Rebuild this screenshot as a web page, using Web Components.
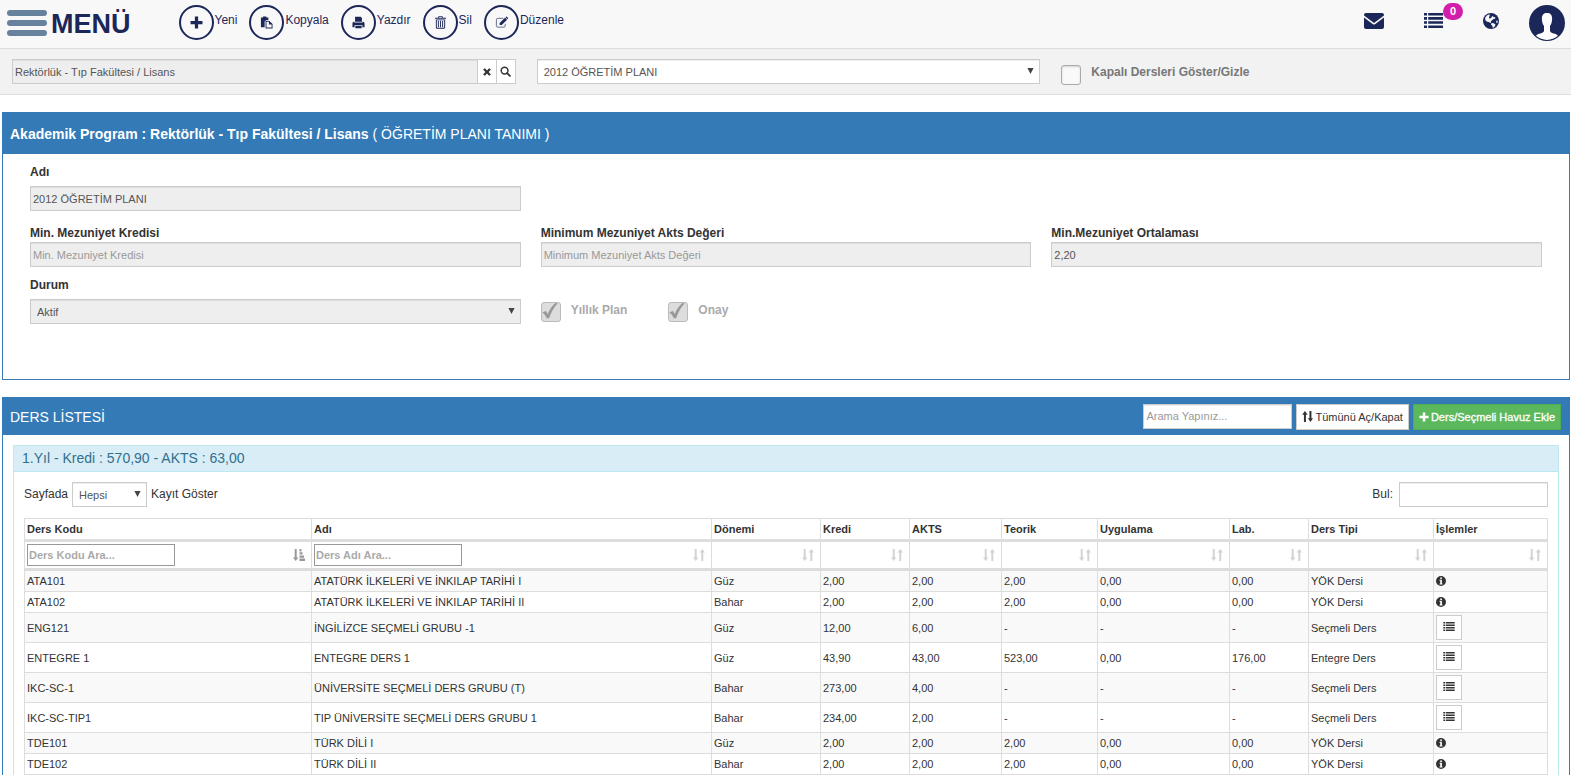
<!DOCTYPE html>
<html lang="tr">
<head>
<meta charset="utf-8">
<meta name="viewport" content="width=device-width, initial-scale=1">
<title>Öğretim Planı Tanımı</title>
<style>
  body {
    margin: 0;
    font: 12px/20px "Liberation Sans", Arial, sans-serif;
    color: #333;
    background: #fff;
  }
</style>
</head>
<body>
<plan-page></plan-page>

<script>
// Icon shapes, all filled with the current text colour
const ICONS = {
  plus: ['0 0 12 12', '<path d="M4.500 .5h3v4h4v3h-4v4h-3v-4h-4v-3h4z"/>'],
  paste: ['0 0 14 14', '<path d="M1 1.500h2.200V.6h3.600v.9H9v3H6.500L5 6v6H1z"/><path fill-rule="evenodd" d="M6 5.300h4.200L13.500 8.600v4.900H6zM7 6.300v6.200h5.500V9.200H9.600V6.300z"/>'],
  print: ['0 0 14 14', '<path d="M3.300 .8h6L10.700 2.200V6.200H3.300z"/><path fill-rule="evenodd" d="M.5 8Q.5 6.200 2 6.200h.8v1.300h8.400V6.200h.8q1.500 0 1.500 1.800V12h-2.300V9.800H2.800V12H.5z"/><path d="M3.600 10.600h6.800V13.200H3.600z"/><path d="M2.800 7h8.400v2.900H2.800z"/>'],
  trash: ['0 0 14 14', '<path fill-rule="evenodd" d="M4.500 2V1q0-.8.8-.8h3.400q.8 0 .8.8v1h3.500v1h-12V2zM5.500 2h3v-.8h-3z"/><path fill-rule="evenodd" d="M2 3.700h10V12.500q0 1.200-1.200 1.200H3.200Q2 13.700 2 12.500zM3 4.700v7.500q0 .5.500.5h7q.5 0 .5-.5V4.700z"/><path d="M4.200 5.200h1v6.800h-1zM6.500 5.200h1v6.800h-1zM8.800 5.200h1v6.800h-1z"/>'],
  edit: ['0 0 14 14', '<path d="M9 2.500H3Q1.500 2.500 1.500 4v6.500Q1.500 12 3 12h6.500q1.500 0 1.500-1.500V8.500" fill="none" stroke="currentColor" stroke-opacity=".7"/><path d="M5 9.800V7.600L10.800 1.800 13 4 7.200 9.800z"/><path d="M11.300 1.300l.6-.6q.4-.4.8 0l1.300 1.300q.4.400 0 .8l-.6.600z"/>'],
  mail: ['0 0 20 16', '<path d="M2 0h16q2 0 2 2v.5L10 10 0 2.500V2q0-2 2-2z"/><path d="M0 4.500l9 6.700q1 .7 2 0l9-6.700V14q0 2-2 2H2q-2 0-2-2z"/>'],
  list: ['0 0 19 15', '<path d="M0 0h3v2.600H0zM4.200 0H19v2.600H4.200zM0 4.100h3v2.600H0zM4.200 4.100H19v2.600H4.200zM0 8.200h3v2.600H0zM4.200 8.200H19v2.600H4.200zM0 12.400h3V15H0zM4.200 12.400H19V15H4.200z"/>'],
  globe: ['0 0 16 16', '<circle cx="8" cy="8" r="8"/><path fill="#f8f8f8" d="M6.500 1.300L3.800 2.400 2 5.100l.5 2.400 1.600 1.300 1.800.3 1.200 1 1-.5-.3-1.200 1.500-1.500L10.600 6l1.800-.6L12 4l-1.500.3-.6-1.400-1.600.8-1.600-.6zM8.500 10l2.200.3 1.800 1.300-.6 1.600-2 1.700-.7-2.200-1.200-1.200zM13 8l1.700-.5-.2 2.200-.8.600z"/><path d="M6 3.500l2-.8 1 1.300-1.300 1.200-1.500.2z"/>'],
  avatar: ['0 0 36 36', '<circle cx="18" cy="18" r="18"/><path fill="#fff" d="M18 8c3.600 0 5.300 2.300 5.100 6-.1 3.300-1 5.500-2.100 7v5c.4 2.500 6.500 2.300 8 4.800A16.800 16.800 0 0 1 7 30.800c1.500-2.500 7.600-2.300 8-4.800v-5c-1.100-1.500-2-3.700-2.100-7C12.700 10.300 14.400 8 18 8z"/>'],
  times: ['0 0 10 10', '<path d="M2.200 .8L5 3.600 7.800 .8 9.200 2.200 6.400 5l2.800 2.800-1.400 1.400L5 6.400 2.200 9.200.8 7.800 3.600 5 .8 2.200z" stroke="currentColor" stroke-width="1.200"/>'],
  search: ['0 0 12 12', '<circle cx="5" cy="5" r="3.700" fill="none" stroke="currentColor" stroke-width="1.600"/><path d="M7.800 7.800l3 3" stroke="currentColor" stroke-width="2" stroke-linecap="round"/>'],
  swap: ['0 0 12 12', '<path d="M3.200 0l3 4H4.300V12H2.100V4H.2zM9.200 12L6.400 8h1.700V0h2.200v8H12z"/>'],
  sort: ['0 0 12 12', '<path d="M2.700 12L0 8.500h1.700V0h2v8.500h1.700zM9.300 0L12 3.500h-1.700V12h-2V3.500H6.600z"/>'],
  sorted: ['0 0 12 12', '<path d="M2.700 12L0 8.500h1.700V0h2v8.500h1.700zM6.500 0h2v2.400h-2zM6.500 3.200h3v2.400h-3zM6.500 6.400H11v2.400H6.500zM6.500 9.600H12V12H6.500z"/>'],
  info: ['0 0 10 10', '<path fill-rule="evenodd" d="M5 0a5 5 0 1 1 0 10A5 5 0 0 1 5 0zM4.200 1.400v1.500h1.700V1.400zM3.500 3.800v1h.7v2.700h-.7v1h3v-1h-.6V3.800z"/>'],
  caret: ['0 0 8 8', '<path d="M.5 1h7L4 8z"/>'],
  check: ['0 0 20 20', '<path d="M1.500 11.500l4-1.500q1.500 2 2 3.500Q10 6 16 1l2.500.5Q12 9 9 18H6.500Q4.500 14 1.500 11.500z"/>']
};

const INPUT_CSS = `
  *, *::before { box-sizing: border-box; }
  input, select, button { font: inherit; color: inherit; margin: 0; }
  input::placeholder { color: #999; opacity: 1; }
`;

// Small helper so that every element gets an open shadow root
class BaseElement extends HTMLElement {
  connectedCallback() {
    if (this.shadowRoot) return;
    this.attachShadow({ mode: 'open' });
    this.shadowRoot.innerHTML = this.template();
  }

  attr(name) {
    return this.getAttribute(name) || '';
  }
}

class UiIcon extends BaseElement {
  template() {
    const [box, shape] = ICONS[this.attr('name')];
    const width = this.attr('width') || 12;
    const height = this.attr('height') || width;
    return `
      <style>
        :host { display: inline-block; flex: none; line-height: 0; }
        svg { display: block; fill: currentColor; }
      </style>
      <svg width="${width}" height="${height}" viewBox="${box}" aria-hidden="true">${shape}</svg>
    `;
  }
}
customElements.define('ui-icon', UiIcon);

// Round toolbar button with its text on the right
class ToolButton extends BaseElement {
  template() {
    return `
      <style>
        :host { display: block; }
        button {
          display: flex;
          align-items: flex-start;
          gap: 1px;
          padding: 0;
          border: 0;
          background: none;
          font: inherit;
          line-height: 30px;
          color: #1c2759;
          cursor: pointer;
        }
        .circle {
          box-sizing: border-box;
          width: 35px;
          height: 35px;
          border: 2px solid #1c2759;
          border-radius: 50%;
          display: grid;
          place-items: center;
        }
      </style>
      <button type="button">
        <span class="circle"><ui-icon name="${this.attr('icon')}" width="13"></ui-icon></span>
        <slot></slot>
      </button>
    `;
  }
}
customElements.define('tool-button', ToolButton);

class TopBar extends BaseElement {
  template() {
    return `
      <style>
        :host {
          box-sizing: border-box;
          display: flex;
          align-items: flex-start;
          justify-content: space-between;
          height: 49px;
          padding: 5px 6px 0 7px;
          background: #f8f8f8;
          border-bottom: 1px solid #ddd;
          color: #1c2759;
        }
        .left, .tools, .right, .icons { display: flex; }
        .left { gap: 48px; }
        .tools { gap: 12px; }
        .menu {
          display: flex;
          align-items: flex-start;
          gap: 4px;
          padding: 0;
          border: 0;
          background: none;
          color: inherit;
          font: bold 27px/38px "Liberation Sans", Arial, sans-serif;
        }
        .bars { display: grid; gap: 4px; width: 40px; padding-top: 5px; }
        .bars i { height: 6px; border-radius: 3px; background: #67829c; }
        .right { align-items: flex-start; gap: 30px; }
        .icons { align-items: center; gap: 40px; height: 33px; }
        a { color: inherit; position: relative; display: block; }
        .icons a { padding-top: 4px; }
        .badge {
          position: absolute;
          left: 19px;
          top: -6px;
          padding: 0 7px;
          border-radius: 9px;
          background: #d11fab;
          color: #fff;
          font: bold 11px/17px "Liberation Sans", Arial, sans-serif;
        }
      </style>
      <div class="left">
        <button class="menu" type="button"><span class="bars"><i></i><i></i><i></i></span>MENÜ</button>
        <div class="tools">
          <tool-button icon="plus">Yeni</tool-button>
          <tool-button icon="paste">Kopyala</tool-button>
          <tool-button icon="print">Yazdır</tool-button>
          <tool-button icon="trash">Sil</tool-button>
          <tool-button icon="edit">Düzenle</tool-button>
        </div>
      </div>
      <div class="right">
        <nav class="icons">
          <a href="#mesaj" aria-label="Mesajlar"><ui-icon name="mail" width="20" height="16"></ui-icon></a>
          <a href="#gorev" aria-label="Görevler"><ui-icon name="list" width="19" height="15"></ui-icon><span class="badge">0</span></a>
          <a href="#dil" aria-label="Dil"><ui-icon name="globe" width="16"></ui-icon></a>
        </nav>
        <a href="#profil" aria-label="Profil"><ui-icon name="avatar" width="36"></ui-icon></a>
      </div>
    `;
  }
}
customElements.define('top-bar', TopBar);

// Label + text box. Without a label only the box is shown
class TextField extends BaseElement {
  template() {
    const label = this.attr('label');
    const disabled = this.hasAttribute('disabled') ? 'disabled' : '';
    return `
      <style>
        ${INPUT_CSS}
        :host { display: block; min-width: 0; }
        label { display: block; font-weight: bold; line-height: 18px; padding-top: 2px; margin-bottom: var(--label-gap, 0); }
        input {
          display: block;
          width: 100%;
          height: 25px;
          padding: 0 2px;
          border: 1px solid #ccc;
          border-radius: 0;
          background: #fff;
          box-shadow: inset 0 1px 1px rgba(0, 0, 0, .075);
          font-size: 11px;
          color: #555;
        }
        input:disabled { background: #eee; }
      </style>
      ${label ? `<label for="box">${label}</label>` : ''}
      <input id="box" type="text" value="${this.attr('value')}" placeholder="${this.attr('placeholder')}"
        ${label ? '' : `aria-label="${this.attr('name')}"`} ${disabled}>
    `;
  }
}
customElements.define('text-field', TextField);

class SelectField extends BaseElement {
  template() {
    const label = this.attr('label');
    const disabled = this.hasAttribute('disabled') ? 'disabled' : '';
    return `
      <style>
        ${INPUT_CSS}
        :host { display: block; min-width: 0; }
        label { display: block; font-weight: bold; line-height: 18px; padding-top: 2px; margin-bottom: var(--label-gap, 0); }
        .box { display: grid; align-items: center; color: #555; }
        .box > * { grid-area: 1 / 1; }
        select {
          appearance: none;
          width: 100%;
          height: 25px;
          padding: 0 20px 0 6px;
          border: 1px solid #ccc;
          border-radius: 0;
          background: #fff;
          box-shadow: inset 0 1px 1px rgba(0, 0, 0, .075);
          font-size: 11px;
          line-height: 20px;
          opacity: 1;
        }
        select:disabled { background: #eee; }
        ui-icon { justify-self: end; margin: 0 6px 2px 0; color: #444; pointer-events: none; }
      </style>
      ${label ? `<label for="box">${label}</label>` : ''}
      <div class="box">
        <select id="box" ${label ? '' : `aria-label="${this.attr('name')}"`} ${disabled}>
          <option>${this.attr('value')}</option>
        </select>
        <ui-icon name="caret" width="7"></ui-icon>
      </div>
    `;
  }
}
customElements.define('select-field', SelectField);

class CheckField extends BaseElement {
  template() {
    const checked = this.hasAttribute('checked');
    const disabled = this.hasAttribute('disabled');
    return `
      <style>
        ${INPUT_CSS}
        :host { display: block; }
        label { display: flex; align-items: flex-start; gap: 10px; font-weight: bold; line-height: 15px; color: #777; }
        label.off { color: #aaa; line-height: 17px; }
        .box { display: grid; }
        .box > * { grid-area: 1 / 1; }
        input {
          appearance: none;
          width: 20px;
          height: 20px;
          border: 1px solid #aaa;
          border-radius: 3px;
          background: #f9f9f9;
          box-shadow: inset 0 1px 2px rgba(0, 0, 0, .15);
        }
        input:disabled { border-color: #bbb; background: #ddd; box-shadow: none; }
        ui-icon { color: #999; pointer-events: none; }
      </style>
      <label class="${disabled ? 'off' : ''}">
        <span class="box">
          <input type="checkbox" ${checked ? 'checked' : ''} ${disabled ? 'disabled' : ''}>
          ${checked ? '<ui-icon name="check" width="18"></ui-icon>' : ''}
        </span>
        <slot></slot>
      </label>
    `;
  }
}
customElements.define('check-field', CheckField);

class FilterBar extends BaseElement {
  template() {
    return `
      <style>
        :host {
          display: grid;
          grid-template-columns: repeat(3, 1fr);
          align-items: start;
          gap: 21px;
          padding: 10px 6px 9px 12px;
          background: #f2f2f2;
          border-bottom: 1px solid #ddd;
        }
        .program { display: flex; }
        .program text-field { flex: 1; }
        button {
          box-sizing: border-box;
          display: grid;
          place-items: center;
          width: 20px;
          height: 25px;
          margin-left: -1px;
          padding: 0;
          border: 1px solid #ccc;
          background: #fff;
          color: #333;
        }
        check-field { margin-top: 6px; }
      </style>
      <div class="program">
        <text-field name="Program" value="Rektörlük - Tıp Fakültesi / Lisans" disabled></text-field>
        <button type="button" aria-label="Temizle"><ui-icon name="times" width="8"></ui-icon></button>
        <button type="button" aria-label="Ara"><ui-icon name="search" width="11"></ui-icon></button>
      </div>
      <select-field name="Öğretim planı" value="2012 ÖĞRETİM PLANI"></select-field>
      <check-field>Kapalı Dersleri Göster/Gizle</check-field>
    `;
  }
}
customElements.define('filter-bar', FilterBar);

// Blue panel: "title" and "actions" slots in the heading, the rest in the body
class BluePanel extends BaseElement {
  template() {
    return `
      <style>
        :host { display: block; border: 1px solid #337ab7; }
        header {
          display: flex;
          align-items: center;
          justify-content: space-between;
          min-height: var(--heading-height, 41px);
          padding: 0 8px 0 7px;
          background: #337ab7;
          color: #fff;
          font-size: 14px;
        }
      </style>
      <header><slot name="title"></slot><slot name="actions"></slot></header>
      <slot></slot>
    `;
  }
}
customElements.define('blue-panel', BluePanel);

class PlanForm extends BaseElement {
  template() {
    return `
      <style>
        :host { display: grid; gap: 7px; padding: 7px 27px 55px; }
        .row { display: grid; grid-template-columns: repeat(3, 1fr); gap: 20px; }
        .spaced { --label-gap: 5px; }
        .first { padding-bottom: 4px; }
        .checks { display: flex; gap: 41px; padding-top: 28px; }
      </style>
      <div class="row spaced first">
        <text-field label="Adı" value="2012 ÖĞRETİM PLANI" disabled></text-field>
      </div>
      <div class="row">
        <text-field label="Min. Mezuniyet Kredisi" placeholder="Min. Mezuniyet Kredisi" disabled></text-field>
        <text-field label="Minimum Mezuniyet Akts Değeri" placeholder="Minimum Mezuniyet Akts Değeri" disabled></text-field>
        <text-field label="Min.Mezuniyet Ortalaması" value="2,20" disabled></text-field>
      </div>
      <div class="row spaced">
        <select-field label="Durum" value="Aktif" disabled></select-field>
        <div class="checks">
          <check-field checked disabled>Yıllık Plan</check-field>
          <check-field checked disabled>Onay</check-field>
        </div>
      </div>
    `;
  }
}
customElements.define('plan-form', PlanForm);

const COLUMNS = [
  ['Ders Kodu', 287], ['Adı', 400], ['Dönemi', 109], ['Kredi', 89], ['AKTS', 92],
  ['Teorik', 96], ['Uygulama', 132], ['Lab.', 79], ['Ders Tipi', 125], ['İşlemler', 114]
];

const COURSES = [
  ['ATA101', 'ATATÜRK İLKELERİ VE İNKILAP TARİHİ I', 'Güz', '2,00', '2,00', '2,00', '0,00', '0,00', 'YÖK Dersi'],
  ['ATA102', 'ATATÜRK İLKELERİ VE İNKILAP TARİHİ II', 'Bahar', '2,00', '2,00', '2,00', '0,00', '0,00', 'YÖK Dersi'],
  ['ENG121', 'İNGİLİZCE SEÇMELİ GRUBU -1', 'Güz', '12,00', '6,00', '-', '-', '-', 'Seçmeli Ders'],
  ['ENTEGRE 1', 'ENTEGRE DERS 1', 'Güz', '43,90', '43,00', '523,00', '0,00', '176,00', 'Entegre Ders'],
  ['IKC-SC-1', 'ÜNİVERSİTE SEÇMELİ DERS GRUBU (T)', 'Bahar', '273,00', '4,00', '-', '-', '-', 'Seçmeli Ders'],
  ['IKC-SC-TIP1', 'TIP ÜNİVERSİTE SEÇMELİ DERS GRUBU 1', 'Bahar', '234,00', '2,00', '-', '-', '-', 'Seçmeli Ders'],
  ['TDE101', 'TÜRK DİLİ I', 'Güz', '2,00', '2,00', '2,00', '0,00', '0,00', 'YÖK Dersi'],
  ['TDE102', 'TÜRK DİLİ II', 'Bahar', '2,00', '2,00', '2,00', '0,00', '0,00', 'YÖK Dersi']
];

class CourseTable extends BaseElement {
  filterCell(name, index) {
    const text = index === 1 ? 'Ders Adı' : name;
    const input = index < 2 ? `<input type="text" aria-label="${text}" placeholder="${text} Ara...">` : '';
    return `<th><div class="filter">${input}<ui-icon name="${index ? 'sort' : 'sorted'}"></ui-icon></div></th>`;
  }

  row(course) {
    // YÖK courses only have an info mark, groups open a list
    const action = course[8] === 'YÖK Dersi'
      ? '<ui-icon name="info" width="10"></ui-icon>'
      : '<button type="button" aria-label="Dersler"><ui-icon name="list" width="12" height="9"></ui-icon></button>';
    return `<tr>${course.map(text => `<td>${text}</td>`).join('')}<td>${action}</td></tr>`;
  }

  template() {
    return `
      <style>
        ${INPUT_CSS}
        :host { display: block; }
        table {
          width: 100%;
          table-layout: fixed;
          border-collapse: separate;
          border-spacing: 0;
          border: solid #ddd;
          border-width: 1px 0 0 1px;
          font-size: 11px;
          line-height: 16px;
        }
        th, td { padding: 2px; border: solid #ddd; border-width: 0 1px 1px 0; text-align: left; }
        th { border-bottom-width: 3px; }
        tbody tr:nth-child(odd) { background: #f9f9f9; }
        .filter { display: flex; align-items: center; justify-content: space-between; height: 22px; padding-right: 4px; }
        .filter ui-icon { margin-left: auto; color: #d3d3d3; }
        .filter ui-icon[name="sorted"] { color: #999; }
        .filter input { width: 148px; height: 22px; padding: 0 1px; border: 1px solid #999; border-radius: 0; }
        .filter input::placeholder { color: #aaa; }
        td ui-icon { display: block; }
        button { display: grid; place-items: center; width: 26px; height: 25px; padding: 0 0 2px; border: 1px solid #ccc; background: #fff; }
      </style>
      <table>
        <colgroup>${COLUMNS.map(([, width]) => `<col style="width: ${width}px">`).join('')}</colgroup>
        <thead>
          <tr>${COLUMNS.map(([name]) => `<th>${name}</th>`).join('')}</tr>
          <tr>${COLUMNS.map(([name], index) => this.filterCell(name, index)).join('')}</tr>
        </thead>
        <tbody>${COURSES.map(course => this.row(course)).join('')}</tbody>
      </table>
    `;
  }
}
customElements.define('course-table', CourseTable);

// One year of the plan with its paging controls and table
class YearPanel extends BaseElement {
  template() {
    return `
      <style>
        :host { display: block; margin: 10px; border: 1px solid #bce8f1; }
        h2 {
          margin: 0;
          padding: 0 8px;
          background: #d9edf7;
          border-bottom: 1px solid #bce8f1;
          color: #31708f;
          font-size: 14px;
          font-weight: normal;
          line-height: 25px;
        }
        .content { padding: 10px; }
        .controls { display: flex; justify-content: space-between; margin-bottom: 11px; line-height: 25px; }
        .controls div { display: flex; gap: 4px; }
        select-field { width: 75px; }
        .find text-field { width: 149px; }
        .controls .find { gap: 6px; }
      </style>
      <h2><slot name="title"></slot></h2>
      <div class="content">
        <div class="controls">
          <div>Sayfada <select-field name="Sayfada kayıt" value="Hepsi"></select-field> Kayıt Göster</div>
          <div class="find">Bul: <text-field name="Bul"></text-field></div>
        </div>
        <course-table></course-table>
      </div>
    `;
  }
}
customElements.define('year-panel', YearPanel);

class PanelActions extends BaseElement {
  template() {
    return `
      <style>
        :host { display: flex; gap: 4px; color: #333; font-size: 11px; }
        text-field { width: 149px; }
        button {
          display: flex;
          align-items: center;
          gap: 2px;
          height: 26px;
          padding: 0 5px;
          border: 1px solid #ccc;
          background: #fff;
          color: #333;
          font: inherit;
          white-space: nowrap;
        }
        .add { border-color: #4cae4c; background: #5cb85c; color: #fff; -webkit-text-stroke: .3px #fff; }
      </style>
      <text-field name="Arama" placeholder="Arama Yapınız..."></text-field>
      <button type="button"><ui-icon name="swap" width="11"></ui-icon>Tümünü Aç/Kapat</button>
      <button type="button" class="add"><ui-icon name="plus" width="10"></ui-icon>Ders/Seçmeli Havuz Ekle</button>
    `;
  }
}
customElements.define('panel-actions', PanelActions);

class PlanPage extends BaseElement {
  template() {
    return `
      <style>
        :host { display: block; height: 100vh; overflow-y: auto; scrollbar-width: none; }
        main { display: grid; gap: 17px; padding: 17px 2px; }
        .courses { --heading-height: 37px; }
      </style>
      <top-bar></top-bar>
      <filter-bar></filter-bar>
      <main>
        <blue-panel>
          <span slot="title"><b>Akademik Program : Rektörlük - Tıp Fakültesi / Lisans</b> ( ÖĞRETİM PLANI TANIMI )</span>
          <plan-form></plan-form>
        </blue-panel>
        <blue-panel class="courses">
          <span slot="title">DERS LİSTESİ</span>
          <panel-actions slot="actions"></panel-actions>
          <year-panel><span slot="title">1.Yıl - Kredi : 570,90 - AKTS : 63,00</span></year-panel>
        </blue-panel>
      </main>
    `;
  }
}
customElements.define('plan-page', PlanPage);
</script>
</body>
</html>
